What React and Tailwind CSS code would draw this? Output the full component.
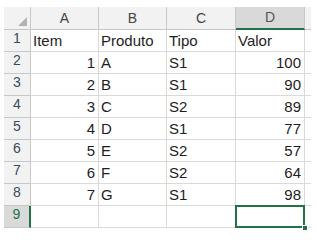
import React from "react";

const cols = ["A", "B", "C", "D"];
const rows = [
  ["Item", "Produto", "Tipo", "Valor"],
  [1, "A", "S1", 100],
  [2, "B", "S1", 90],
  [3, "C", "S2", 89],
  [4, "D", "S1", 77],
  [5, "E", "S2", 57],
  [6, "F", "S2", 64],
  [7, "G", "S1", 98],
  ["", "", "", ""],
];

export default function App() {
  return (
    <div
      className="w-[317px] h-[240px] bg-white overflow-hidden pt-[7px] pl-[4px]"
      style={{ fontFamily: '"Liberation Sans", Arial, sans-serif' }}
    >
      <div className="grid grid-cols-[27px_68px_68px_69px_69px_6px] grid-rows-[23px_repeat(9,22px)]">
        {/* corner */}
        <div className="relative bg-[#f2f2f2] border-r border-b border-[#c8c8c8]">
          <div className="absolute right-[3px] bottom-[3px] w-0 h-0 border-l-[9px] border-l-transparent border-b-[9px] border-b-[#b4b4b4]"></div>
        </div>
        {cols.map((c) =>
          c === "D" ? (
            <div
              key={c}
              className="flex items-center justify-center bg-[#d9d9d9] border-r border-[#c8c8c8] border-b-2 border-b-[#217346] text-[14px] text-[#555]"
            >
              {c}
            </div>
          ) : (
            <div
              key={c}
              className="flex items-center justify-center bg-[#f2f2f2] border-r border-b border-[#c8c8c8] text-[14px] text-[#444]"
            >
              {c}
            </div>
          )
        )}
        <div className="bg-[#f2f2f2] border-b border-[#c8c8c8]"></div>

        {rows.map((r, i) => {
          const last = i === 8;
          return (
            <React.Fragment key={i}>
              {last ? (
                <div className="flex items-end justify-center pb-[2px] bg-[#d9d9d9] border-b border-[#c8c8c8] border-r-2 border-r-[#217346] text-[14px] text-[#217346]">
                  {i + 1}
                </div>
              ) : (
                <div className="flex items-end justify-center pb-[2px] bg-[#f2f2f2] border-r border-b border-[#c8c8c8] text-[14px] text-[#3b4a5a]">
                  {i + 1}
                </div>
              )}
              {r.map((v, j) => {
                const num = typeof v === "number";
                const sel = last && j === 3;
                return (
                  <div
                    key={j}
                    className={
                      "relative flex items-end pb-[2px] border-r border-b border-[#dadada] text-[15px] leading-[17px] text-[#1e1e1e] " +
                      (num ? "justify-end pr-[3px]" : "justify-start pl-[2px]")
                    }
                  >
                    {v}
                    {sel && (
                      <>
                        <div className="absolute -left-px -top-px w-[70px] h-[23px] border-2 border-[#217346]"></div>
                        <div className="absolute -right-[4px] -bottom-[4px] w-[6px] h-[6px] bg-[#217346] border border-white"></div>
                      </>
                    )}
                  </div>
                );
              })}
              <div className="border-b border-[#dadada]"></div>
            </React.Fragment>
          );
        })}
      </div>
    </div>
  );
}
